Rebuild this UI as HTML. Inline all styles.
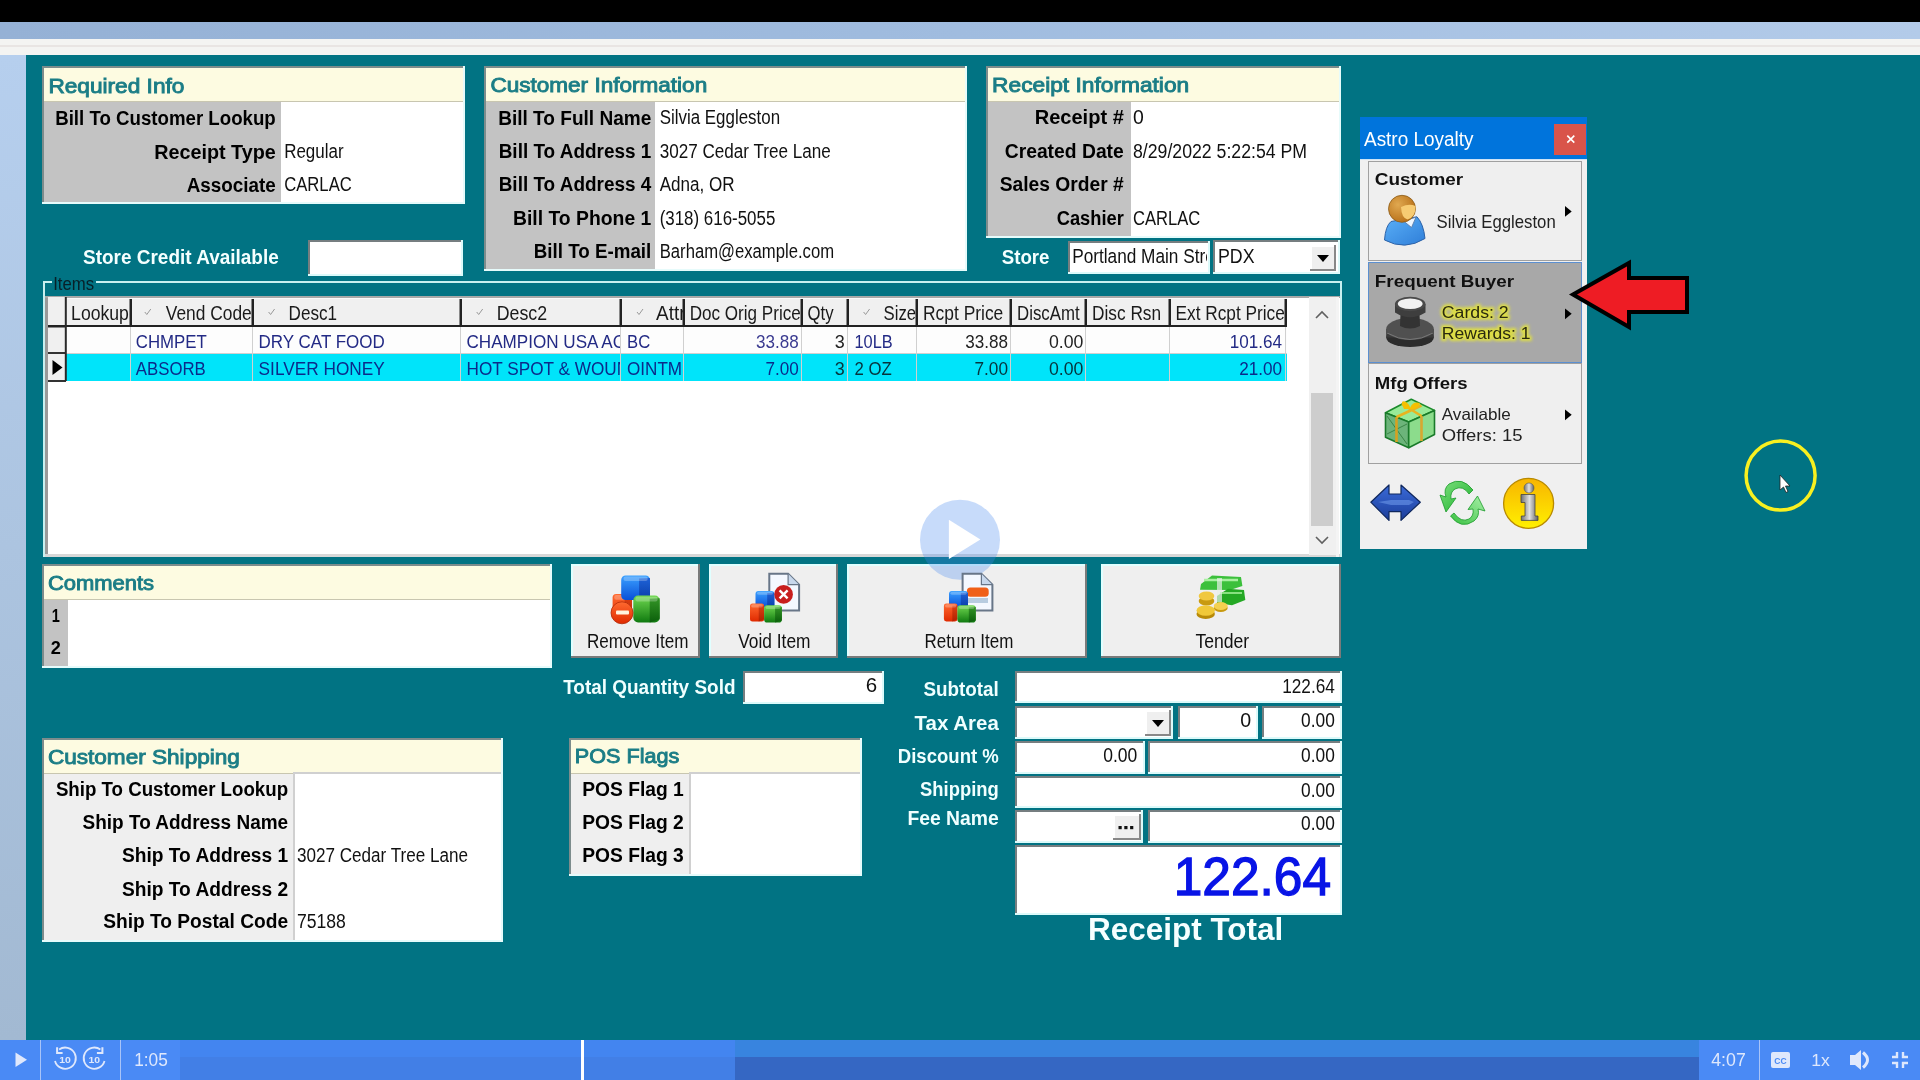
<!DOCTYPE html>
<html><head><meta charset="utf-8"><title>POS</title>
<style>html,body{margin:0;padding:0;background:#017383;overflow:hidden;} svg{display:block;filter:blur(0.45px);}</style>
</head><body>
<svg width="1920" height="1080" viewBox="0 0 1920 1080" shape-rendering="auto">
<defs><linearGradient id="gTopBand" x1="0" y1="0" x2="1" y2="0"><stop offset="0" stop-color="#95b1d5"/><stop offset="0.5" stop-color="#a0bcdf"/><stop offset="1" stop-color="#b3cbe9"/></linearGradient>
<linearGradient id="gLeftStrip" x1="0" y1="0" x2="0" y2="1"><stop offset="0" stop-color="#b6cfee"/><stop offset="1" stop-color="#a2b9d2"/></linearGradient>
<filter id="blur" x="-50%" y="-50%" width="200%" height="200%"><feGaussianBlur stdDeviation="6"/></filter>
<filter id="glow" x="-20%" y="-50%" width="140%" height="200%"><feGaussianBlur stdDeviation="1.6"/></filter>
<linearGradient id="gBody" x1="0" y1="0" x2="1" y2="1"><stop offset="0" stop-color="#5ab0f8"/><stop offset="1" stop-color="#2f7ed8"/></linearGradient>
<radialGradient id="gHair" cx="0.35" cy="0.35" r="0.7"><stop offset="0" stop-color="#e0a850"/><stop offset="1" stop-color="#b87018"/></radialGradient>
<linearGradient id="gBlueArrow" x1="0" y1="0" x2="0" y2="1"><stop offset="0" stop-color="#3a6ad8"/><stop offset="1" stop-color="#1c3e9a"/></linearGradient>
<linearGradient id="gGreen1" x1="0" y1="0" x2="1" y2="1"><stop offset="0" stop-color="#80e080"/><stop offset="1" stop-color="#18b028"/></linearGradient>
<linearGradient id="gGreen2" x1="0" y1="1" x2="1" y2="0"><stop offset="0" stop-color="#38c040"/><stop offset="1" stop-color="#a8f0a8"/></linearGradient>
<linearGradient id="gInfo" x1="0" y1="0" x2="0" y2="1"><stop offset="0" stop-color="#f8b400"/><stop offset="1" stop-color="#fff000"/></linearGradient>
<linearGradient id="gSteel" x1="0" y1="0" x2="1" y2="0"><stop offset="0" stop-color="#707070"/><stop offset="0.5" stop-color="#e0e0e0"/><stop offset="1" stop-color="#606060"/></linearGradient>
<linearGradient id="gBF" x1="0" y1="0" x2="0" y2="1"><stop offset="0" stop-color="#3aa0ff"/><stop offset="1" stop-color="#0a50d8"/></linearGradient>
<linearGradient id="gBS" x1="0" y1="0" x2="0" y2="1"><stop offset="0" stop-color="#1a58d0"/><stop offset="1" stop-color="#0a3aa0"/></linearGradient>
<linearGradient id="gRF" x1="0" y1="0" x2="0" y2="1"><stop offset="0" stop-color="#ff6a30"/><stop offset="1" stop-color="#e02a00"/></linearGradient>
<linearGradient id="gRS" x1="0" y1="0" x2="0" y2="1"><stop offset="0" stop-color="#d83a10"/><stop offset="1" stop-color="#a82000"/></linearGradient>
<linearGradient id="gGF" x1="0" y1="0" x2="0" y2="1"><stop offset="0" stop-color="#70d850"/><stop offset="1" stop-color="#107a10"/></linearGradient>
<linearGradient id="gGS" x1="0" y1="0" x2="0" y2="1"><stop offset="0" stop-color="#2a8a20"/><stop offset="1" stop-color="#0a5a0a"/></linearGradient>
</defs>
<rect x="0" y="0" width="1920" height="1080" fill="#017383" />
<rect x="0" y="0" width="1920" height="22" fill="#000" />
<rect x="0" y="22" width="1920" height="17" fill="url(#gTopBand)" />
<rect x="0" y="39" width="1920" height="16" fill="#f4f4f2" />
<rect x="0" y="45" width="1920" height="2" fill="#e9e5e3" />
<rect x="0" y="55" width="26" height="985" fill="url(#gLeftStrip)" />
<rect x="42" y="66" width="423" height="138" fill="#e6fbfb" />
<rect x="42" y="66" width="421" height="136" fill="#7c8c8c" />
<rect x="44" y="68" width="419" height="134" fill="#fff" />
<rect x="44" y="68" width="419" height="34" fill="#fdfbe1" />
<rect x="44" y="101" width="419" height="1" fill="#c8c6b0" />
<rect x="44" y="102" width="237" height="100" fill="#c3c3c3" />
<text x="48.40" y="92.60" font-family="Liberation Sans" font-size="20.64" font-weight="normal" fill="#1b7d86" textLength="136.00" lengthAdjust="spacingAndGlyphs" stroke="#1b7d86" stroke-width="0.9">Required Info</text>
<text x="55.20" y="125.00" font-family="Liberation Sans" font-size="20.35" font-weight="bold" fill="#000" textLength="220.60" lengthAdjust="spacingAndGlyphs" >Bill To Customer Lookup</text>
<text x="154.20" y="158.80" font-family="Liberation Sans" font-size="20.35" font-weight="bold" fill="#000" textLength="121.60" lengthAdjust="spacingAndGlyphs" >Receipt Type</text>
<text x="186.70" y="192.00" font-family="Liberation Sans" font-size="20.35" font-weight="bold" fill="#000" textLength="89.10" lengthAdjust="spacingAndGlyphs" >Associate</text>
<text x="284.20" y="158.00" font-family="Liberation Sans" font-size="19.33" font-weight="normal" fill="#111" textLength="59.40" lengthAdjust="spacingAndGlyphs" >Regular</text>
<text x="284.20" y="191.30" font-family="Liberation Sans" font-size="19.33" font-weight="normal" fill="#111" textLength="67.60" lengthAdjust="spacingAndGlyphs" >CARLAC</text>
<text x="83.00" y="263.80" font-family="Liberation Sans" font-size="19.48" font-weight="bold" fill="#f4ffff" textLength="195.80" lengthAdjust="spacingAndGlyphs" >Store Credit Available</text>
<rect x="308" y="240" width="155" height="36" fill="#fff" />
<rect x="308" y="240" width="155" height="2" fill="#767e80" />
<rect x="308" y="240" width="2" height="36" fill="#767e80" />
<rect x="308" y="274" width="155" height="2" fill="#dcfafa" />
<rect x="461" y="240" width="2" height="36" fill="#dcfafa" />
<rect x="484" y="66" width="483" height="205" fill="#e6fbfb" />
<rect x="484" y="66" width="481" height="203" fill="#7c8c8c" />
<rect x="486" y="68" width="479" height="201" fill="#fff" />
<rect x="486" y="68" width="479" height="34" fill="#fdfbe1" />
<rect x="486" y="101" width="479" height="1" fill="#c8c6b0" />
<rect x="486" y="102" width="169" height="167" fill="#c3c3c3" />
<text x="490.40" y="92.20" font-family="Liberation Sans" font-size="20.06" font-weight="normal" fill="#1b7d86" textLength="216.80" lengthAdjust="spacingAndGlyphs" stroke="#1b7d86" stroke-width="0.9">Customer Information</text>
<text x="498.20" y="124.60" font-family="Liberation Sans" font-size="19.77" font-weight="bold" fill="#000" textLength="153.10" lengthAdjust="spacingAndGlyphs" >Bill To Full Name</text>
<text x="498.70" y="157.50" font-family="Liberation Sans" font-size="19.77" font-weight="bold" fill="#000" textLength="152.60" lengthAdjust="spacingAndGlyphs" >Bill To Address 1</text>
<text x="498.70" y="191.00" font-family="Liberation Sans" font-size="19.77" font-weight="bold" fill="#000" textLength="152.60" lengthAdjust="spacingAndGlyphs" >Bill To Address 4</text>
<text x="513.00" y="224.80" font-family="Liberation Sans" font-size="19.77" font-weight="bold" fill="#000" textLength="138.30" lengthAdjust="spacingAndGlyphs" >Bill To Phone 1</text>
<text x="533.70" y="257.50" font-family="Liberation Sans" font-size="19.77" font-weight="bold" fill="#000" textLength="117.60" lengthAdjust="spacingAndGlyphs" >Bill To E-mail</text>
<text x="659.70" y="124.00" font-family="Liberation Sans" font-size="19.33" font-weight="normal" fill="#111" textLength="120.40" lengthAdjust="spacingAndGlyphs" >Silvia Eggleston</text>
<text x="659.70" y="157.50" font-family="Liberation Sans" font-size="19.33" font-weight="normal" fill="#111" textLength="171.10" lengthAdjust="spacingAndGlyphs" >3027 Cedar Tree Lane</text>
<text x="659.70" y="191.30" font-family="Liberation Sans" font-size="19.33" font-weight="normal" fill="#111" textLength="74.90" lengthAdjust="spacingAndGlyphs" >Adna, OR</text>
<text x="659.70" y="225.00" font-family="Liberation Sans" font-size="19.33" font-weight="normal" fill="#111" textLength="115.60" lengthAdjust="spacingAndGlyphs" >(318) 616-5055</text>
<text x="659.70" y="257.50" font-family="Liberation Sans" font-size="19.33" font-weight="normal" fill="#111" textLength="174.40" lengthAdjust="spacingAndGlyphs" >Barham@example.com</text>
<rect x="986" y="66" width="355" height="172" fill="#e6fbfb" />
<rect x="986" y="66" width="353" height="170" fill="#7c8c8c" />
<rect x="988" y="68" width="351" height="168" fill="#fff" />
<rect x="988" y="68" width="351" height="34" fill="#fdfbe1" />
<rect x="988" y="101" width="351" height="1" fill="#c8c6b0" />
<rect x="988" y="102" width="143" height="134" fill="#c3c3c3" />
<text x="992.10" y="92.20" font-family="Liberation Sans" font-size="20.06" font-weight="normal" fill="#1b7d86" textLength="197.10" lengthAdjust="spacingAndGlyphs" stroke="#1b7d86" stroke-width="0.9">Receipt Information</text>
<text x="1034.70" y="124.00" font-family="Liberation Sans" font-size="19.77" font-weight="bold" fill="#000" textLength="89.10" lengthAdjust="spacingAndGlyphs" >Receipt #</text>
<text x="1004.70" y="157.50" font-family="Liberation Sans" font-size="19.77" font-weight="bold" fill="#000" textLength="119.10" lengthAdjust="spacingAndGlyphs" >Created Date</text>
<text x="999.70" y="191.30" font-family="Liberation Sans" font-size="19.77" font-weight="bold" fill="#000" textLength="124.10" lengthAdjust="spacingAndGlyphs" >Sales Order #</text>
<text x="1056.70" y="224.80" font-family="Liberation Sans" font-size="19.77" font-weight="bold" fill="#000" textLength="67.10" lengthAdjust="spacingAndGlyphs" >Cashier</text>
<text x="1133.00" y="124.00" font-family="Liberation Sans" font-size="19.33" font-weight="normal" fill="#111" textLength="10.80" lengthAdjust="spacingAndGlyphs" >0</text>
<text x="1133.00" y="157.50" font-family="Liberation Sans" font-size="19.33" font-weight="normal" fill="#111" textLength="174.10" lengthAdjust="spacingAndGlyphs" >8/29/2022 5:22:54 PM</text>
<text x="1133.00" y="224.80" font-family="Liberation Sans" font-size="19.33" font-weight="normal" fill="#111" textLength="67.30" lengthAdjust="spacingAndGlyphs" >CARLAC</text>
<text x="1001.70" y="264.20" font-family="Liberation Sans" font-size="19.48" font-weight="bold" fill="#f4ffff" textLength="47.80" lengthAdjust="spacingAndGlyphs" >Store</text>
<rect x="1068" y="241" width="142" height="33" fill="#fff" />
<rect x="1068" y="241" width="142" height="2" fill="#767e80" />
<rect x="1068" y="241" width="2" height="33" fill="#767e80" />
<rect x="1068" y="272" width="142" height="2" fill="#dcfafa" />
<rect x="1208" y="241" width="2" height="33" fill="#dcfafa" />
<clipPath id="cp1"><rect x="1070" y="243" width="137" height="29"/></clipPath><g clip-path="url(#cp1)"><text x="1072.2" y="262.5" font-family="Liberation Sans" font-size="19.3" fill="#111" textLength="157" lengthAdjust="spacingAndGlyphs">Portland Main Street</text></g>
<rect x="1213" y="240" width="127" height="34" fill="#fff" />
<rect x="1213" y="240" width="127" height="2" fill="#767e80" />
<rect x="1213" y="240" width="2" height="34" fill="#767e80" />
<rect x="1213" y="272" width="127" height="2" fill="#dcfafa" />
<rect x="1338" y="240" width="2" height="34" fill="#dcfafa" />
<text x="1218.00" y="262.50" font-family="Liberation Sans" font-size="19.33" font-weight="normal" fill="#111" textLength="36.60" lengthAdjust="spacingAndGlyphs" >PDX</text>
<rect x="1310" y="245" width="26" height="26" fill="#efefef" />
<rect x="1310" y="245" width="26" height="2" fill="#fff" />
<rect x="1310" y="245" width="2" height="26" fill="#fff" />
<rect x="1310" y="269" width="26" height="2" fill="#888" />
<rect x="1334" y="245" width="2" height="26" fill="#888" />
<path d="M1317 255 L1329 255 L1323 262 Z" fill="#000"/>
<rect x="43" y="281" width="1298" height="2" fill="#c8f0f0" />
<rect x="43" y="281" width="2" height="276" fill="#c8f0f0" />
<rect x="52" y="274" width="44" height="12" fill="#017383" />
<text x="53.20" y="289.70" font-family="Liberation Sans" font-size="17.73" font-weight="normal" fill="#082028" textLength="41.00" lengthAdjust="spacingAndGlyphs" >Items</text>
<rect x="45" y="297" width="1295" height="260" fill="#fff" />
<rect x="45" y="297" width="3" height="260" fill="#9a9a9a" />
<rect x="45" y="296" width="1295" height="2" fill="#a8a8a8" />
<rect x="45" y="554" width="1295" height="3" fill="#d8d8d8" />
<rect x="48" y="297" width="18" height="84" fill="#f0f0f0" />
<rect x="66" y="298" width="1221" height="28" fill="#f0f0f0" />
<rect x="48" y="325" width="1239" height="2.5" fill="#222" />
<rect x="129.5" y="298" width="2.5" height="28" fill="#222" />
<rect x="251.5" y="298" width="2.5" height="28" fill="#222" />
<rect x="459.5" y="298" width="2.5" height="28" fill="#222" />
<rect x="619.5" y="298" width="2.5" height="28" fill="#222" />
<rect x="682.5" y="298" width="2.5" height="28" fill="#222" />
<rect x="800.5" y="298" width="2.5" height="28" fill="#222" />
<rect x="846.5" y="298" width="2.5" height="28" fill="#222" />
<rect x="915.5" y="298" width="2.5" height="28" fill="#222" />
<rect x="1009.5" y="298" width="2.5" height="28" fill="#222" />
<rect x="1084.5" y="298" width="2.5" height="28" fill="#222" />
<rect x="1168.5" y="298" width="2.5" height="28" fill="#222" />
<rect x="1284.5" y="298" width="2.5" height="28" fill="#222" />
<rect x="66" y="298" width="1221" height="1" fill="#fafafa" />
<rect x="66" y="327" width="1221" height="27" fill="#fdfdfd" />
<rect x="48" y="353" width="1239" height="1" fill="#d0d0d0" />
<rect x="48" y="352" width="18" height="2" fill="#333" />
<rect x="66" y="354" width="1221" height="27" fill="#00e4fa" />
<rect x="48" y="380" width="18" height="2" fill="#333" />
<rect x="130" y="327" width="1" height="54" fill="#d0d0d0" />
<rect x="252" y="327" width="1" height="54" fill="#d0d0d0" />
<rect x="460" y="327" width="1" height="54" fill="#d0d0d0" />
<rect x="620" y="327" width="1" height="54" fill="#d0d0d0" />
<rect x="683" y="327" width="1" height="54" fill="#d0d0d0" />
<rect x="801" y="327" width="1" height="54" fill="#d0d0d0" />
<rect x="847" y="327" width="1" height="54" fill="#d0d0d0" />
<rect x="916" y="327" width="1" height="54" fill="#d0d0d0" />
<rect x="1010" y="327" width="1" height="54" fill="#d0d0d0" />
<rect x="1085" y="327" width="1" height="54" fill="#d0d0d0" />
<rect x="1169" y="327" width="1" height="54" fill="#d0d0d0" />
<rect x="1285" y="327" width="1" height="54" fill="#d0d0d0" />
<rect x="64.8" y="297" width="2" height="84" fill="#2a2a2a" />
<path d="M52.5 360 L62.5 367.5 L52.5 375 Z" fill="#000"/>
<text x="71.10" y="319.50" font-family="Liberation Sans" font-size="19.77" font-weight="normal" fill="#1a1a1a" textLength="57.80" lengthAdjust="spacingAndGlyphs" >Lookup</text>
<text x="165.80" y="319.50" font-family="Liberation Sans" font-size="19.77" font-weight="normal" fill="#1a1a1a" textLength="86.00" lengthAdjust="spacingAndGlyphs" >Vend Code</text>
<text x="288.60" y="319.50" font-family="Liberation Sans" font-size="19.77" font-weight="normal" fill="#1a1a1a" textLength="48.50" lengthAdjust="spacingAndGlyphs" >Desc1</text>
<text x="496.70" y="319.50" font-family="Liberation Sans" font-size="19.77" font-weight="normal" fill="#1a1a1a" textLength="50.40" lengthAdjust="spacingAndGlyphs" >Desc2</text>
<clipPath id="cp2"><rect x="656" y="298" width="27" height="28"/></clipPath><g clip-path="url(#cp2)"><text x="656" y="319.5" font-family="Liberation Sans" font-size="19.8" fill="#1a1a1a" textLength="29.5" lengthAdjust="spacingAndGlyphs">Attr</text></g>
<text x="689.70" y="319.50" font-family="Liberation Sans" font-size="19.77" font-weight="normal" fill="#1a1a1a" textLength="111.10" lengthAdjust="spacingAndGlyphs" >Doc Orig Price</text>
<text x="807.60" y="319.50" font-family="Liberation Sans" font-size="19.77" font-weight="normal" fill="#1a1a1a" textLength="26.00" lengthAdjust="spacingAndGlyphs" >Qty</text>
<text x="883.60" y="319.50" font-family="Liberation Sans" font-size="19.77" font-weight="normal" fill="#1a1a1a" textLength="32.50" lengthAdjust="spacingAndGlyphs" >Size</text>
<text x="923.00" y="319.50" font-family="Liberation Sans" font-size="19.77" font-weight="normal" fill="#1a1a1a" textLength="80.30" lengthAdjust="spacingAndGlyphs" >Rcpt Price</text>
<text x="1017.00" y="319.50" font-family="Liberation Sans" font-size="19.77" font-weight="normal" fill="#1a1a1a" textLength="62.60" lengthAdjust="spacingAndGlyphs" >DiscAmt</text>
<text x="1092.00" y="319.50" font-family="Liberation Sans" font-size="19.77" font-weight="normal" fill="#1a1a1a" textLength="69.10" lengthAdjust="spacingAndGlyphs" >Disc Rsn</text>
<text x="1175.50" y="319.50" font-family="Liberation Sans" font-size="19.77" font-weight="normal" fill="#1a1a1a" textLength="109.30" lengthAdjust="spacingAndGlyphs" >Ext Rcpt Price</text>
<path d="M144.8 312 L146.8 314.5 L150.8 309" stroke="#999" stroke-width="1" fill="none"/>
<path d="M268.6 312 L270.6 314.5 L274.6 309" stroke="#999" stroke-width="1" fill="none"/>
<path d="M476.7 312 L478.7 314.5 L482.7 309" stroke="#999" stroke-width="1" fill="none"/>
<path d="M637 312 L639 314.5 L643 309" stroke="#999" stroke-width="1" fill="none"/>
<path d="M863.6 312 L865.6 314.5 L869.6 309" stroke="#999" stroke-width="1" fill="none"/>
<text x="135.80" y="347.80" font-family="Liberation Sans" font-size="19.04" font-weight="normal" fill="#232a85" textLength="71.00" lengthAdjust="spacingAndGlyphs" >CHMPET</text>
<text x="135.80" y="374.50" font-family="Liberation Sans" font-size="19.04" font-weight="normal" fill="#0b2a8a" textLength="70.00" lengthAdjust="spacingAndGlyphs" >ABSORB</text>
<text x="258.60" y="347.80" font-family="Liberation Sans" font-size="19.04" font-weight="normal" fill="#232a85" textLength="126.20" lengthAdjust="spacingAndGlyphs" >DRY CAT FOOD</text>
<text x="258.60" y="374.50" font-family="Liberation Sans" font-size="19.04" font-weight="normal" fill="#0b2a8a" textLength="126.20" lengthAdjust="spacingAndGlyphs" >SILVER HONEY</text>
<clipPath id="cp3"><rect x="462" y="327" width="158" height="54"/></clipPath><g clip-path="url(#cp3)">
<text x="466.5" y="347.8" font-family="Liberation Sans" font-size="19" fill="#232a85" textLength="170" lengthAdjust="spacingAndGlyphs">CHAMPION USA ACE</text>
<text x="466.5" y="374.5" font-family="Liberation Sans" font-size="19" fill="#0b2a8a" textLength="175" lengthAdjust="spacingAndGlyphs">HOT SPOT &amp; WOUND</text>
</g>
<text x="627.00" y="347.80" font-family="Liberation Sans" font-size="19.04" font-weight="normal" fill="#232a85" textLength="23.20" lengthAdjust="spacingAndGlyphs" >BC</text>
<text x="627.00" y="374.50" font-family="Liberation Sans" font-size="19.04" font-weight="normal" fill="#0b2a8a" textLength="55.10" lengthAdjust="spacingAndGlyphs" >OINTM</text>
<text x="756.10" y="347.80" font-family="Liberation Sans" font-size="19.04" font-weight="normal" fill="#3a3a90" textLength="42.70" lengthAdjust="spacingAndGlyphs" >33.88</text>
<text x="765.50" y="374.50" font-family="Liberation Sans" font-size="19.04" font-weight="normal" fill="#0b2a8a" textLength="33.30" lengthAdjust="spacingAndGlyphs" >7.00</text>
<text x="834.80" y="347.80" font-family="Liberation Sans" font-size="19.04" font-weight="normal" fill="#222" textLength="10.00" lengthAdjust="spacingAndGlyphs" >3</text>
<text x="834.80" y="374.50" font-family="Liberation Sans" font-size="19.04" font-weight="normal" fill="#06343c" textLength="10.00" lengthAdjust="spacingAndGlyphs" >3</text>
<text x="854.50" y="347.80" font-family="Liberation Sans" font-size="19.04" font-weight="normal" fill="#232a85" textLength="38.20" lengthAdjust="spacingAndGlyphs" >10LB</text>
<text x="854.50" y="374.50" font-family="Liberation Sans" font-size="19.04" font-weight="normal" fill="#06343c" textLength="37.30" lengthAdjust="spacingAndGlyphs" >2 OZ</text>
<text x="965.20" y="347.80" font-family="Liberation Sans" font-size="19.04" font-weight="normal" fill="#222" textLength="42.80" lengthAdjust="spacingAndGlyphs" >33.88</text>
<text x="974.50" y="374.50" font-family="Liberation Sans" font-size="19.04" font-weight="normal" fill="#06343c" textLength="33.50" lengthAdjust="spacingAndGlyphs" >7.00</text>
<text x="1048.90" y="347.80" font-family="Liberation Sans" font-size="19.04" font-weight="normal" fill="#222" textLength="34.40" lengthAdjust="spacingAndGlyphs" >0.00</text>
<text x="1048.90" y="374.50" font-family="Liberation Sans" font-size="19.04" font-weight="normal" fill="#06343c" textLength="34.40" lengthAdjust="spacingAndGlyphs" >0.00</text>
<text x="1229.80" y="347.80" font-family="Liberation Sans" font-size="19.04" font-weight="normal" fill="#232a85" textLength="52.30" lengthAdjust="spacingAndGlyphs" >101.64</text>
<text x="1239.20" y="374.50" font-family="Liberation Sans" font-size="19.04" font-weight="normal" fill="#0b2a8a" textLength="42.90" lengthAdjust="spacingAndGlyphs" >21.00</text>
<rect x="1309" y="297" width="27" height="258" fill="#f0f0f0" />
<rect x="1336" y="297" width="3" height="260" fill="#f4f4f4" />
<rect x="1311" y="393" width="22" height="133" fill="#cdcdcd" />
<path d="M1316 318 L1322 312 L1328 318" stroke="#606060" stroke-width="1.6" fill="none"/>
<path d="M1316 537 L1322 543 L1328 537" stroke="#606060" stroke-width="1.6" fill="none"/>
<rect x="1340" y="281" width="2" height="276" fill="#c8f0f0" />
<rect x="42" y="564" width="510" height="104" fill="#e6fbfb" />
<rect x="42" y="564" width="508" height="102" fill="#7c8c8c" />
<rect x="44" y="566" width="506" height="100" fill="#fff" />
<rect x="44" y="566" width="506" height="34" fill="#fdfbe1" />
<rect x="44" y="599" width="506" height="1" fill="#c8c6b0" />
<rect x="44" y="600" width="24" height="66" fill="#c3c3c3" />
<text x="47.90" y="589.60" font-family="Liberation Sans" font-size="20.06" font-weight="normal" fill="#1b7d86" textLength="106.20" lengthAdjust="spacingAndGlyphs" stroke="#1b7d86" stroke-width="0.9">Comments</text>
<text x="51.70" y="621.60" font-family="Liberation Sans" font-size="18.60" font-weight="bold" fill="#000" textLength="8.10" lengthAdjust="spacingAndGlyphs" >1</text>
<text x="50.70" y="653.90" font-family="Liberation Sans" font-size="18.60" font-weight="bold" fill="#000" textLength="10.10" lengthAdjust="spacingAndGlyphs" >2</text>
<rect x="571" y="564" width="129" height="94" fill="#efefef" />
<rect x="571" y="564" width="129" height="2" fill="#e0ffff" />
<rect x="571" y="564" width="2" height="94" fill="#e0ffff" />
<rect x="571" y="656" width="129" height="2" fill="#7a7a7a" />
<rect x="698" y="564" width="2" height="94" fill="#7a7a7a" />
<rect x="709" y="564" width="129" height="94" fill="#efefef" />
<rect x="709" y="564" width="129" height="2" fill="#e0ffff" />
<rect x="709" y="564" width="2" height="94" fill="#e0ffff" />
<rect x="709" y="656" width="129" height="2" fill="#7a7a7a" />
<rect x="836" y="564" width="2" height="94" fill="#7a7a7a" />
<rect x="847" y="564" width="240" height="94" fill="#efefef" />
<rect x="847" y="564" width="240" height="2" fill="#e0ffff" />
<rect x="847" y="564" width="2" height="94" fill="#e0ffff" />
<rect x="847" y="656" width="240" height="2" fill="#7a7a7a" />
<rect x="1085" y="564" width="2" height="94" fill="#7a7a7a" />
<rect x="1101" y="564" width="240" height="94" fill="#efefef" />
<rect x="1101" y="564" width="240" height="2" fill="#e0ffff" />
<rect x="1101" y="564" width="2" height="94" fill="#e0ffff" />
<rect x="1101" y="656" width="240" height="2" fill="#7a7a7a" />
<rect x="1339" y="564" width="2" height="94" fill="#7a7a7a" />
<text x="587.00" y="648.00" font-family="Liberation Sans" font-size="19.33" font-weight="normal" fill="#111" textLength="101.60" lengthAdjust="spacingAndGlyphs" >Remove Item</text>
<text x="738.20" y="648.00" font-family="Liberation Sans" font-size="19.33" font-weight="normal" fill="#111" textLength="72.30" lengthAdjust="spacingAndGlyphs" >Void Item</text>
<text x="924.50" y="648.00" font-family="Liberation Sans" font-size="19.33" font-weight="normal" fill="#111" textLength="88.80" lengthAdjust="spacingAndGlyphs" >Return Item</text>
<text x="1195.40" y="648.00" font-family="Liberation Sans" font-size="19.33" font-weight="normal" fill="#111" textLength="53.80" lengthAdjust="spacingAndGlyphs" >Tender</text>
<text x="563.20" y="694.00" font-family="Liberation Sans" font-size="20.35" font-weight="bold" fill="#f0ffff" textLength="172.30" lengthAdjust="spacingAndGlyphs" >Total Quantity Sold</text>
<rect x="743" y="671" width="141" height="33" fill="#fff" />
<rect x="743" y="671" width="141" height="2" fill="#767e80" />
<rect x="743" y="671" width="2" height="33" fill="#767e80" />
<rect x="743" y="702" width="141" height="2" fill="#dcfafa" />
<rect x="882" y="671" width="2" height="33" fill="#dcfafa" />
<text x="865.70" y="692.30" font-family="Liberation Sans" font-size="19.33" font-weight="normal" fill="#111" textLength="11.40" lengthAdjust="spacingAndGlyphs" >6</text>
<text x="923.40" y="696.00" font-family="Liberation Sans" font-size="20.35" font-weight="bold" fill="#f0ffff" textLength="75.40" lengthAdjust="spacingAndGlyphs" >Subtotal</text>
<text x="914.60" y="729.50" font-family="Liberation Sans" font-size="20.35" font-weight="bold" fill="#f0ffff" textLength="84.20" lengthAdjust="spacingAndGlyphs" >Tax Area</text>
<text x="897.80" y="762.50" font-family="Liberation Sans" font-size="20.35" font-weight="bold" fill="#f0ffff" textLength="101.00" lengthAdjust="spacingAndGlyphs" >Discount %</text>
<text x="920.10" y="796.00" font-family="Liberation Sans" font-size="20.35" font-weight="bold" fill="#f0ffff" textLength="78.70" lengthAdjust="spacingAndGlyphs" >Shipping</text>
<text x="907.40" y="825.30" font-family="Liberation Sans" font-size="20.35" font-weight="bold" fill="#f0ffff" textLength="91.40" lengthAdjust="spacingAndGlyphs" >Fee Name</text>
<rect x="1015" y="671" width="327" height="32" fill="#fff" />
<rect x="1015" y="671" width="327" height="2" fill="#767e80" />
<rect x="1015" y="671" width="2" height="32" fill="#767e80" />
<rect x="1015" y="701" width="327" height="2" fill="#dcfafa" />
<rect x="1340" y="671" width="2" height="32" fill="#dcfafa" />
<text x="1282.20" y="692.80" font-family="Liberation Sans" font-size="19.33" font-weight="normal" fill="#111" textLength="52.60" lengthAdjust="spacingAndGlyphs" >122.64</text>
<rect x="1015" y="706" width="158" height="33" fill="#fff" />
<rect x="1015" y="706" width="158" height="2" fill="#767e80" />
<rect x="1015" y="706" width="2" height="33" fill="#767e80" />
<rect x="1015" y="737" width="158" height="2" fill="#dcfafa" />
<rect x="1171" y="706" width="2" height="33" fill="#dcfafa" />
<rect x="1145" y="710" width="26" height="26" fill="#efefef" />
<rect x="1145" y="710" width="26" height="2" fill="#fff" />
<rect x="1145" y="710" width="2" height="26" fill="#fff" />
<rect x="1145" y="734" width="26" height="2" fill="#888" />
<rect x="1169" y="710" width="2" height="26" fill="#888" />
<path d="M1152 720 L1164 720 L1158 727 Z" fill="#000"/>
<rect x="1178" y="706" width="80" height="33" fill="#fff" />
<rect x="1178" y="706" width="80" height="2" fill="#767e80" />
<rect x="1178" y="706" width="2" height="33" fill="#767e80" />
<rect x="1178" y="737" width="80" height="2" fill="#dcfafa" />
<rect x="1256" y="706" width="2" height="33" fill="#dcfafa" />
<text x="1240.20" y="726.60" font-family="Liberation Sans" font-size="19.33" font-weight="normal" fill="#111" textLength="10.90" lengthAdjust="spacingAndGlyphs" >0</text>
<rect x="1262" y="706" width="80" height="33" fill="#fff" />
<rect x="1262" y="706" width="80" height="2" fill="#767e80" />
<rect x="1262" y="706" width="2" height="33" fill="#767e80" />
<rect x="1262" y="737" width="80" height="2" fill="#dcfafa" />
<rect x="1340" y="706" width="2" height="33" fill="#dcfafa" />
<text x="1301.10" y="726.60" font-family="Liberation Sans" font-size="19.33" font-weight="normal" fill="#111" textLength="33.70" lengthAdjust="spacingAndGlyphs" >0.00</text>
<rect x="1015" y="741" width="130" height="33" fill="#fff" />
<rect x="1015" y="741" width="130" height="2" fill="#767e80" />
<rect x="1015" y="741" width="2" height="33" fill="#767e80" />
<rect x="1015" y="772" width="130" height="2" fill="#dcfafa" />
<rect x="1143" y="741" width="2" height="33" fill="#dcfafa" />
<text x="1103.20" y="762.20" font-family="Liberation Sans" font-size="19.33" font-weight="normal" fill="#111" textLength="34.10" lengthAdjust="spacingAndGlyphs" >0.00</text>
<rect x="1148" y="741" width="194" height="33" fill="#fff" />
<rect x="1148" y="741" width="194" height="2" fill="#767e80" />
<rect x="1148" y="741" width="2" height="33" fill="#767e80" />
<rect x="1148" y="772" width="194" height="2" fill="#dcfafa" />
<rect x="1340" y="741" width="2" height="33" fill="#dcfafa" />
<text x="1301.10" y="762.20" font-family="Liberation Sans" font-size="19.33" font-weight="normal" fill="#111" textLength="33.70" lengthAdjust="spacingAndGlyphs" >0.00</text>
<rect x="1015" y="776" width="327" height="32" fill="#fff" />
<rect x="1015" y="776" width="327" height="2" fill="#767e80" />
<rect x="1015" y="776" width="2" height="32" fill="#767e80" />
<rect x="1015" y="806" width="327" height="2" fill="#dcfafa" />
<rect x="1340" y="776" width="2" height="32" fill="#dcfafa" />
<text x="1301.10" y="796.90" font-family="Liberation Sans" font-size="19.33" font-weight="normal" fill="#111" textLength="33.70" lengthAdjust="spacingAndGlyphs" >0.00</text>
<rect x="1015" y="810" width="128" height="33" fill="#fff" />
<rect x="1015" y="810" width="128" height="2" fill="#767e80" />
<rect x="1015" y="810" width="2" height="33" fill="#767e80" />
<rect x="1015" y="841" width="128" height="2" fill="#dcfafa" />
<rect x="1141" y="810" width="2" height="33" fill="#dcfafa" />
<rect x="1113" y="814" width="28" height="26" fill="#efefef" />
<rect x="1113" y="814" width="28" height="2" fill="#fff" />
<rect x="1113" y="814" width="2" height="26" fill="#fff" />
<rect x="1113" y="838" width="28" height="2" fill="#888" />
<rect x="1139" y="814" width="2" height="26" fill="#888" />
<rect x="1118.5" y="826" width="3.2" height="3.2" fill="#111"/><rect x="1124.3" y="826" width="3.2" height="3.2" fill="#111"/><rect x="1130.1" y="826" width="3.2" height="3.2" fill="#111"/>
<rect x="1148" y="810" width="194" height="33" fill="#fff" />
<rect x="1148" y="810" width="194" height="2" fill="#767e80" />
<rect x="1148" y="810" width="2" height="33" fill="#767e80" />
<rect x="1148" y="841" width="194" height="2" fill="#dcfafa" />
<rect x="1340" y="810" width="2" height="33" fill="#dcfafa" />
<text x="1301.10" y="829.70" font-family="Liberation Sans" font-size="19.33" font-weight="normal" fill="#111" textLength="33.70" lengthAdjust="spacingAndGlyphs" >0.00</text>
<rect x="1015" y="845" width="327" height="70" fill="#fff" />
<rect x="1015" y="845" width="327" height="2" fill="#767e80" />
<rect x="1015" y="845" width="2" height="70" fill="#767e80" />
<rect x="1015" y="913" width="327" height="2" fill="#dcfafa" />
<rect x="1340" y="845" width="2" height="70" fill="#dcfafa" />
<text x="1173.70" y="894.60" font-family="Liberation Sans" font-size="53.49" font-weight="normal" fill="#0814e6" textLength="157.40" lengthAdjust="spacingAndGlyphs" stroke="#0814e6" stroke-width="1.3">122.64</text>
<text x="1088.00" y="940.00" font-family="Liberation Sans" font-size="31.98" font-weight="bold" fill="#f6ffff" textLength="195.30" lengthAdjust="spacingAndGlyphs" >Receipt Total</text>
<rect x="569" y="738" width="293" height="138" fill="#e6fbfb" />
<rect x="569" y="738" width="291" height="136" fill="#7c8c8c" />
<rect x="571" y="740" width="289" height="134" fill="#fff" />
<rect x="571" y="740" width="289" height="34" fill="#fdfbe1" />
<rect x="571" y="773" width="289" height="1" fill="#c8c6b0" />
<rect x="571" y="774" width="120" height="100" fill="#efefef" />
<text x="574.80" y="763.10" font-family="Liberation Sans" font-size="20.49" font-weight="normal" fill="#1b7d86" textLength="104.50" lengthAdjust="spacingAndGlyphs" stroke="#1b7d86" stroke-width="0.9">POS Flags</text>
<rect x="689" y="772" width="171" height="2" fill="#d0d0d0" />
<rect x="689" y="772" width="2" height="102" fill="#d0d0d0" />
<text x="582.20" y="796.10" font-family="Liberation Sans" font-size="20.35" font-weight="bold" fill="#000" textLength="101.60" lengthAdjust="spacingAndGlyphs" >POS Flag 1</text>
<text x="582.20" y="828.90" font-family="Liberation Sans" font-size="20.35" font-weight="bold" fill="#000" textLength="101.60" lengthAdjust="spacingAndGlyphs" >POS Flag 2</text>
<text x="582.20" y="862.00" font-family="Liberation Sans" font-size="20.35" font-weight="bold" fill="#000" textLength="101.60" lengthAdjust="spacingAndGlyphs" >POS Flag 3</text>
<rect x="42" y="738" width="461" height="204" fill="#e6fbfb" />
<rect x="42" y="738" width="459" height="202" fill="#7c8c8c" />
<rect x="44" y="740" width="457" height="200" fill="#fff" />
<rect x="44" y="740" width="457" height="34" fill="#fdfbe1" />
<rect x="44" y="773" width="457" height="1" fill="#c8c6b0" />
<rect x="44" y="774" width="251" height="166" fill="#efefef" />
<text x="47.90" y="764.30" font-family="Liberation Sans" font-size="20.06" font-weight="normal" fill="#1b7d86" textLength="192.00" lengthAdjust="spacingAndGlyphs" stroke="#1b7d86" stroke-width="0.9">Customer Shipping</text>
<text x="55.90" y="796.20" font-family="Liberation Sans" font-size="20.35" font-weight="bold" fill="#000" textLength="232.20" lengthAdjust="spacingAndGlyphs" >Ship To Customer Lookup</text>
<text x="82.60" y="829.40" font-family="Liberation Sans" font-size="20.35" font-weight="bold" fill="#000" textLength="205.50" lengthAdjust="spacingAndGlyphs" >Ship To Address Name</text>
<text x="122.00" y="862.30" font-family="Liberation Sans" font-size="20.35" font-weight="bold" fill="#000" textLength="166.10" lengthAdjust="spacingAndGlyphs" >Ship To Address 1</text>
<text x="122.00" y="895.50" font-family="Liberation Sans" font-size="20.35" font-weight="bold" fill="#000" textLength="166.10" lengthAdjust="spacingAndGlyphs" >Ship To Address 2</text>
<text x="103.20" y="928.40" font-family="Liberation Sans" font-size="20.35" font-weight="bold" fill="#000" textLength="184.90" lengthAdjust="spacingAndGlyphs" >Ship To Postal Code</text>
<rect x="293" y="772" width="208" height="2" fill="#d0d0d0" />
<rect x="293" y="772" width="2" height="168" fill="#d0d0d0" />
<text x="296.90" y="862.30" font-family="Liberation Sans" font-size="19.33" font-weight="normal" fill="#111" textLength="171.20" lengthAdjust="spacingAndGlyphs" >3027 Cedar Tree Lane</text>
<text x="296.90" y="928.40" font-family="Liberation Sans" font-size="19.33" font-weight="normal" fill="#111" textLength="48.90" lengthAdjust="spacingAndGlyphs" >75188</text>
<rect x="1360" y="117" width="227" height="432" fill="#f0f0f0" />
<rect x="1360" y="117" width="227" height="42" fill="#0074dc" />
<rect x="1554" y="124" width="32" height="31" fill="#d9544a" />
<path d="M1567.3 135.6 L1574.3 142.6 M1574.3 135.6 L1567.3 142.6" stroke="#fff" stroke-width="1.6"/>
<text x="1364.00" y="146.00" font-family="Liberation Sans" font-size="19.33" font-weight="normal" fill="#fff" textLength="109.50" lengthAdjust="spacingAndGlyphs" >Astro Loyalty</text>
<rect x="1360" y="159" width="227" height="1" fill="#cfe3f6" />
<rect x="1368" y="161" width="214" height="100" fill="#a0a0a0" />
<rect x="1369" y="162" width="212" height="98" fill="#efefef" />
<rect x="1368" y="262" width="214" height="101" fill="#5b8fd0" />
<rect x="1369" y="263" width="212" height="99" fill="#a8a8a8" />
<rect x="1368" y="363" width="214" height="101" fill="#a0a0a0" />
<rect x="1369" y="364" width="212" height="99" fill="#efefef" />
<text x="1374.80" y="185.30" font-family="Liberation Sans" font-size="17.30" font-weight="bold" fill="#111" textLength="88.40" lengthAdjust="spacingAndGlyphs" >Customer</text>
<text x="1436.60" y="228.30" font-family="Liberation Sans" font-size="18.17" font-weight="normal" fill="#222" textLength="119.10" lengthAdjust="spacingAndGlyphs" >Silvia Eggleston</text>
<text x="1374.80" y="286.60" font-family="Liberation Sans" font-size="17.30" font-weight="bold" fill="#111" textLength="139.30" lengthAdjust="spacingAndGlyphs" >Frequent Buyer</text>
<g filter="url(#glow)" opacity="0.9">
<text x="1441.80" y="318.30" font-family="Liberation Sans" font-size="17.30" font-weight="normal" fill="#e4e43a" textLength="66.90" lengthAdjust="spacingAndGlyphs" stroke="#e4e43a" stroke-width="4">Cards: 2</text>
<text x="1441.80" y="339.10" font-family="Liberation Sans" font-size="17.30" font-weight="normal" fill="#e4e43a" textLength="88.70" lengthAdjust="spacingAndGlyphs" stroke="#e4e43a" stroke-width="4">Rewards: 1</text>
</g>
<text x="1441.80" y="318.30" font-family="Liberation Sans" font-size="17.30" font-weight="normal" fill="#2a2a10" textLength="66.90" lengthAdjust="spacingAndGlyphs" >Cards: 2</text>
<text x="1441.80" y="339.10" font-family="Liberation Sans" font-size="17.30" font-weight="normal" fill="#2a2a10" textLength="88.70" lengthAdjust="spacingAndGlyphs" >Rewards: 1</text>
<text x="1374.80" y="388.60" font-family="Liberation Sans" font-size="17.30" font-weight="bold" fill="#111" textLength="92.70" lengthAdjust="spacingAndGlyphs" >Mfg Offers</text>
<text x="1441.80" y="419.90" font-family="Liberation Sans" font-size="16.72" font-weight="normal" fill="#222" textLength="68.90" lengthAdjust="spacingAndGlyphs" >Available</text>
<text x="1441.80" y="441.00" font-family="Liberation Sans" font-size="17.30" font-weight="normal" fill="#222" textLength="80.80" lengthAdjust="spacingAndGlyphs" >Offers: 15</text>
<path d="M1565 206 L1571.7 211.4 L1565 216.8 Z" fill="#000"/>
<path d="M1565 308.4 L1571.7 313.79999999999995 L1565 319.2 Z" fill="#000"/>
<path d="M1565 409.4 L1571.7 414.79999999999995 L1565 420.2 Z" fill="#000"/>
<g>
<path d="M1384.5 240 Q1385.5 226 1391 221.5 L1417 216.8 Q1423.5 224 1425 238.5 Q1405 251 1384.5 240 Z" fill="url(#gBody)" stroke="#2c62a8" stroke-width="1"/>
<path d="M1403.5 221 L1411.5 227.5 L1416 217.2 Z" fill="#eef6ff" stroke="#5a7ca8" stroke-width="0.9"/>
<circle cx="1402" cy="208.8" r="13.5" fill="url(#gHair)" stroke="#8a5a18" stroke-width="0.8"/>
<path d="M1401 207 Q1409 203 1415.5 206 Q1416 217 1407.5 219.5 Q1401.5 218 1401 207 Z" fill="#f7cb72"/>
</g>
<g>
<ellipse cx="1410" cy="337.5" rx="23.8" ry="9.5" fill="#2c2c2c"/>
<rect x="1386.2" y="329" width="47.6" height="8.5" fill="#3a3a3a"/>
<ellipse cx="1410" cy="329" rx="23.8" ry="11" fill="#505050"/>
<path d="M1387 333 Q1410 346 1433 333" stroke="#777" stroke-width="1" fill="none"/>
<path d="M1400.5 314 L1419.5 314 L1420 326 Q1410 331 1400 326 Z" fill="#333"/>
<path d="M1395 304 L1395 312.5 Q1410 322 1425.5 312.5 L1425.5 304 Z" fill="#3e3e3e"/>
<ellipse cx="1410.2" cy="304" rx="15.3" ry="7.2" fill="#4a4a4a"/>
<ellipse cx="1410.2" cy="303.8" rx="12.4" ry="5.2" fill="#f2f2f2"/>
</g>
<g stroke-linejoin="round">
<path d="M1385.5 412.7 L1411.3 399.2 L1434.5 410.4 L1408.7 421.9 Z" fill="#98ea98" stroke="#1a8a2a" stroke-width="1.6"/>
<path d="M1385.5 412.7 L1408.7 421.9 L1408.7 447.7 L1385.5 437.3 Z" fill="#6cb47a" stroke="#1a7a2a" stroke-width="1.6"/>
<path d="M1408.7 421.9 L1434.5 410.4 L1434.5 434.5 L1408.7 447.7 Z" fill="#8cdc8c" stroke="#1a7a2a" stroke-width="1.6"/>
<path d="M1387 416 L1407 444 M1407 424 L1387 434" stroke="#2f7a3a" stroke-width="0.8"/>
<path d="M1396.5 417 L1396.5 442" stroke="#d8a020" stroke-width="2.6"/>
<path d="M1421.5 416 L1421.5 441" stroke="#d8a830" stroke-width="2.6"/>
<path d="M1396.5 417 L1421.5 405.5 M1402 404 L1421.5 416" stroke="#e8b420" stroke-width="2.6"/>
<path d="M1404 409 Q1399 399 1406 402 Q1410 405 1410 408 Q1413 401 1420 403 Q1418 410 1410 409 Z" fill="#f5c000"/>
</g>
<g>
<path d="M1370.8 502.2 L1389 485 L1389 494 L1401 494 L1401 485 L1420.3 502.2 L1401 520.4 L1401 511.6 L1389 511.6 L1389 520.4 Z" fill="url(#gBlueArrow)" stroke="#10285e" stroke-width="1.2" stroke-linejoin="round"/>
<path d="M1378 502 L1391 500 L1409 500 L1414 502 L1409 505 L1391 505 Z" fill="#6a96e8" opacity="0.6"/>
<path d="M1473 490 Q1462 476 1449 484 Q1443 489 1446 497 L1440 495 L1446 512 L1456 498 L1451 499 Q1450 492 1455 489 Q1463 485 1469 494 Z" fill="url(#gGreen1)" stroke="#1a9a2a" stroke-width="0.8"/>
<path d="M1450.5 516 Q1461 530 1474 521 Q1480 516 1478 509 L1485 511 L1477.5 496 L1468 509.5 L1473 509 Q1474 516 1469 519 Q1461 523 1454 513 Z" fill="url(#gGreen2)" stroke="#1a9a2a" stroke-width="0.8"/>
<circle cx="1528.6" cy="503.3" r="25" fill="url(#gInfo)" stroke="#b88a00" stroke-width="1.3"/>
<circle cx="1529" cy="488" r="5" fill="url(#gSteel)" stroke="#555" stroke-width="0.6"/>
<path d="M1521 494.5 L1535 494.5 L1535 516 L1538 516 L1538 520.4 L1521.3 520.4 L1521.3 516 L1525 516 L1525 502.5 L1521 502.5 Z" fill="url(#gSteel)" stroke="#444" stroke-width="0.8"/>
</g>
<path d="M1573 294.5 L1629 263 L1629 278 L1687 278 L1687 312 L1629 312 L1629 327 Z" fill="#ee1c24" stroke="#000" stroke-width="4" stroke-linejoin="miter"/>
<circle cx="1780.6" cy="475.6" r="34.5" fill="none" stroke="#f8f020" stroke-width="3.5"/>
<path d="M1780 475 L1780 490 L1783.5 487 L1786 492.5 L1788 491.5 L1785.5 486 L1790 486 Z" fill="#fff" stroke="#222" stroke-width="0.8"/>
<circle cx="960" cy="539.8" r="40" fill="#4687f0" opacity="0.3"/>
<path d="M948.9 519.8 L948.9 559 L980.4 539.4 Z" fill="#fff"/>
<rect x="612.6" y="594" width="19.399999999999977" height="26" rx="3.5" fill="url(#gRF)"/>
<path d="M624.6 597.1 L632.0 596.6 L632.0 616.9 L624.6 620.0 Z" fill="url(#gRS)" opacity="0.85"/>
<rect x="614.2" y="595.0" width="16.3" height="4.7" rx="2" fill="#fff" opacity="0.25"/>
<rect x="621.2" y="575.5" width="28.799999999999955" height="24.5" rx="4.4" fill="url(#gBF)"/>
<path d="M639.1 578.4 L650.0 578.0 L650.0 597.1 L639.1 600.0 Z" fill="url(#gBS)" opacity="0.85"/>
<rect x="623.5" y="576.5" width="24.2" height="4.4" rx="2" fill="#fff" opacity="0.25"/>
<rect x="633.3" y="595.6" width="26.40000000000009" height="26.899999999999977" rx="4.8" fill="url(#gGF)"/>
<path d="M649.7 598.8 L659.7 598.3 L659.7 619.3 L649.7 622.5 Z" fill="url(#gGS)" opacity="0.85"/>
<rect x="635.4" y="596.7" width="22.2" height="4.8" rx="2" fill="#fff" opacity="0.25"/>
<circle cx="622" cy="612.8" r="11" fill="url(#gRF)" stroke="#b02a08" stroke-width="0.8"/>
<rect x="616" y="610.6" width="13" height="3.8" rx="1" fill="#fff4e0"/>
<path d="M769.3 573.7 L788.1 573.7 L799.1 584.7 L799.1 610.5 L769.3 610.5 Z" fill="#f4f8ff" stroke="#687688" stroke-width="2"/>
<path d="M788.1 573.7 L788.1 584.7 L799.1 584.7" fill="#c8d8ec" stroke="#687688" stroke-width="1.2"/>
<rect x="755.5" y="591" width="18.899999999999977" height="16.600000000000023" rx="3.0" fill="url(#gBF)"/>
<path d="M767.2 593.0 L774.4 592.7 L774.4 605.6 L767.2 607.6 Z" fill="url(#gBS)" opacity="0.85"/>
<rect x="757.0" y="591.7" width="15.9" height="3.0" rx="2" fill="#fff" opacity="0.25"/>
<rect x="750" y="603.6" width="14.100000000000023" height="17.799999999999955" rx="2.5" fill="url(#gRF)"/>
<path d="M758.7 605.7 L764.1 605.4 L764.1 619.3 L758.7 621.4 Z" fill="url(#gRS)" opacity="0.85"/>
<rect x="751.1" y="604.3" width="11.8" height="3.2" rx="2" fill="#fff" opacity="0.25"/>
<rect x="764.1" y="605.3" width="17.799999999999955" height="17.200000000000045" rx="3.1" fill="url(#gGF)"/>
<path d="M775.1 607.4 L781.9 607.0 L781.9 620.4 L775.1 622.5 Z" fill="url(#gGS)" opacity="0.85"/>
<rect x="765.5" y="606.0" width="15.0" height="3.1" rx="2" fill="#fff" opacity="0.25"/>
<circle cx="783.6" cy="594.4" r="9.3" fill="#c81e1e"/>
<path d="M779.6 590.4 L787.6 598.4 M787.6 590.4 L779.6 598.4" stroke="#fff" stroke-width="2.4"/>
<path d="M962.6 573.7 L981.4 573.7 L992.4 584.7 L992.4 610.5 L962.6 610.5 Z" fill="#f4f8ff" stroke="#687688" stroke-width="2"/>
<path d="M981.4 573.7 L981.4 584.7 L992.4 584.7" fill="#c8d8ec" stroke="#687688" stroke-width="1.2"/>
<rect x="966.9" y="587.5" width="21.8" height="9.2" rx="3.5" fill="#f0601a"/>
<rect x="967" y="598" width="21" height="5" fill="#b8cce0"/>
<rect x="949" y="591" width="19" height="16.600000000000023" rx="3.0" fill="url(#gBF)"/>
<path d="M960.8 593.0 L968.0 592.7 L968.0 605.6 L960.8 607.6 Z" fill="url(#gBS)" opacity="0.85"/>
<rect x="950.5" y="591.7" width="16.0" height="3.0" rx="2" fill="#fff" opacity="0.25"/>
<rect x="943.9" y="603.6" width="13.5" height="17.799999999999955" rx="2.4" fill="url(#gRF)"/>
<path d="M952.3 605.7 L957.4 605.4 L957.4 619.3 L952.3 621.4 Z" fill="url(#gRS)" opacity="0.85"/>
<rect x="945.0" y="604.3" width="11.3" height="3.2" rx="2" fill="#fff" opacity="0.25"/>
<rect x="957.4" y="605.3" width="18.399999999999977" height="17.200000000000045" rx="3.1" fill="url(#gGF)"/>
<path d="M968.8 607.4 L975.8 607.0 L975.8 620.4 L968.8 622.5 Z" fill="url(#gGS)" opacity="0.85"/>
<rect x="958.9" y="606.0" width="15.5" height="3.1" rx="2" fill="#fff" opacity="0.25"/>
<g>
<path d="M1201 584 L1212 575.5 L1241 577 L1242.4 586 L1230 590 L1200 589.8 Z" fill="#3cc03c"/>
<path d="M1204 580 L1238 580" stroke="#a8f0a0" stroke-width="2.5"/>
<path d="M1217 596 L1228 588.7 L1244 590 L1245.3 600 L1232 605.3 L1217 603 Z" fill="#24a824"/>
<path d="M1220 593 L1242 593" stroke="#88e080" stroke-width="2"/>
<rect x="1217" y="578" width="5" height="24" fill="#e8f0e8" opacity="0.7"/>
<ellipse cx="1206.5" cy="601" rx="7.8" ry="4.5" fill="#c89a10"/>
<ellipse cx="1206.5" cy="596" rx="7.8" ry="4.5" fill="#f0c840"/>
<ellipse cx="1220.7" cy="608" rx="7" ry="4" fill="#c89a10"/>
<ellipse cx="1220.7" cy="606" rx="7" ry="4" fill="#f4d050"/>
<ellipse cx="1205.7" cy="614" rx="9.2" ry="5" fill="#b88a08"/>
<ellipse cx="1205.7" cy="610.5" rx="9.2" ry="5.2" fill="#f0c838"/>
</g>
<rect x="0" y="1040" width="1920" height="40" fill="#4a8af5" />
<rect x="180" y="1040" width="555" height="17" fill="#4385f0" />
<rect x="180" y="1057" width="555" height="23" fill="#427fe6" />
<rect x="735" y="1040" width="964" height="17" fill="#3884df" />
<rect x="735" y="1057" width="964" height="23" fill="#3567c3" />
<rect x="581" y="1040" width="3" height="40" fill="#fff" />
<rect x="40" y="1040" width="1" height="40" fill="#a8c4f8" />
<rect x="120" y="1040" width="1" height="40" fill="#a8c4f8" />
<rect x="1759" y="1040" width="1" height="40" fill="#a8c4f8" />
<path d="M15.5 1052.5 L15.5 1067 L27 1059.7 Z" fill="#dfe8fc"/>
<g fill="none" stroke="#dfe8fc" stroke-width="1.8">
<path d="M59.1 1049.5 A10.6 10.6 0 1 1 55 1060.9"/>
<path d="M57.1 1047.3 L57.1 1053.1 L62.6 1053.1" stroke-width="2"/>
<path d="M100.4 1049.5 A10.6 10.6 0 1 0 104.5 1060.9"/>
<path d="M102.4 1047.3 L102.4 1053.1 L96.9 1053.1" stroke-width="2"/>
</g>
<text x="59.20" y="1062.60" font-family="Liberation Sans" font-size="9.16" font-weight="bold" fill="#dfe8fc" textLength="11.60" lengthAdjust="spacingAndGlyphs" >10</text>
<text x="88.40" y="1062.60" font-family="Liberation Sans" font-size="9.16" font-weight="bold" fill="#dfe8fc" textLength="11.60" lengthAdjust="spacingAndGlyphs" >10</text>
<text x="134.20" y="1065.50" font-family="Liberation Sans" font-size="17.88" font-weight="normal" fill="#dfe8fc" textLength="33.60" lengthAdjust="spacingAndGlyphs" >1:05</text>
<text x="1711.20" y="1065.50" font-family="Liberation Sans" font-size="17.88" font-weight="normal" fill="#dfe8fc" textLength="34.60" lengthAdjust="spacingAndGlyphs" >4:07</text>
<rect x="1771" y="1052" width="19" height="16" rx="2" fill="#dfe8fc"/>
<text x="1780.5" y="1063.5" font-family="Liberation Sans" font-size="8.5" font-weight="bold" fill="#4a8af5" text-anchor="middle">CC</text>
<text x="1811.20" y="1065.80" font-family="Liberation Sans" font-size="16.72" font-weight="normal" fill="#dfe8fc" textLength="18.60" lengthAdjust="spacingAndGlyphs" >1x</text>
<path d="M1850 1055 L1855 1055 L1861 1050 L1861 1070 L1855 1065 L1850 1065 Z" fill="#dfe8fc"/>
<path d="M1863 1052.5 Q1872 1060 1863 1067.5" stroke="#dfe8fc" stroke-width="3" fill="none"/>
<g stroke="#dfe8fc" stroke-width="2.4" fill="none">
<path d="M1897 1052 L1897 1057 L1892 1057"/>
<path d="M1903 1052 L1903 1057 L1908 1057"/>
<path d="M1897 1068 L1897 1063 L1892 1063"/>
<path d="M1903 1068 L1903 1063 L1908 1063"/>
</g>
</svg>
</body></html>
